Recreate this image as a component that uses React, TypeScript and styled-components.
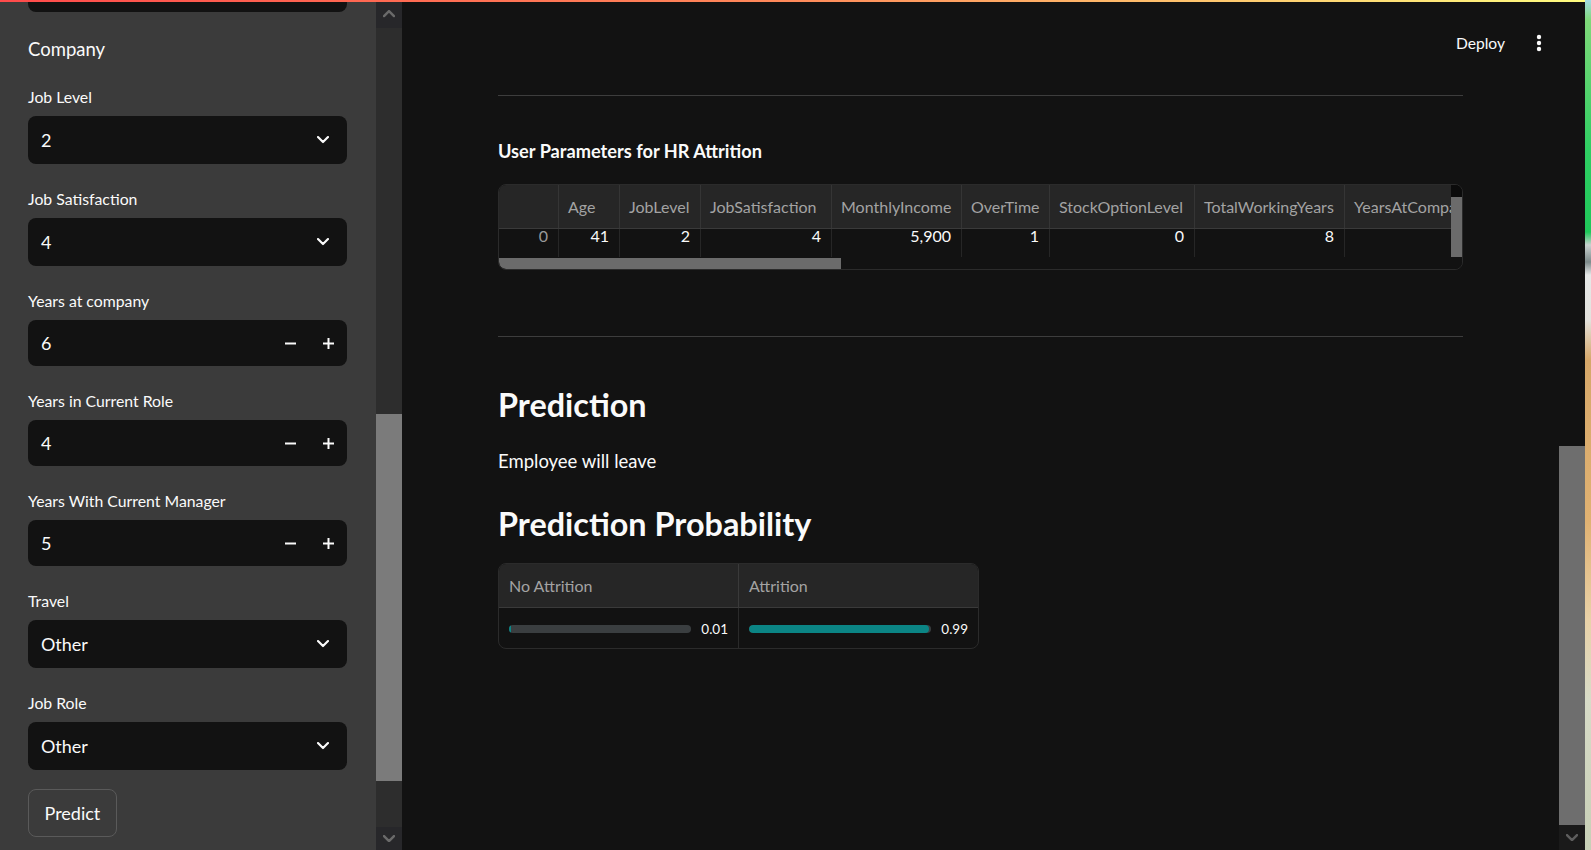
import React from 'react';
import styled, { createGlobalStyle } from 'styled-components';

const GlobalStyle = createGlobalStyle`
  html, body {
    margin: 0;
    padding: 0;
    background: #121212;
    overflow: hidden;
  }
  body {
    font-family: Lato, "Liberation Sans", sans-serif;
    color: #fafafa;
  }
  * {
    box-sizing: border-box;
  }
`;

const Window = styled.div`
  position: relative;
  display: flex;
  width: 1591px;
  height: 850px;
  overflow: hidden;
`;

const Decoration = styled.div`
  position: absolute;
  top: 0;
  left: 0;
  width: 1585px;
  height: 2px;
  background: linear-gradient(90deg, #ff4b4b 0%, #ff8a5a 50%, #fffd80 100%);
  z-index: 5;
`;

/* ---------- sidebar ---------- */

const Sidebar = styled.aside`
  width: 376px;
  height: 850px;
  flex-shrink: 0;
  background: #3b3b3b;
  overflow: hidden;
`;

const SidebarInner = styled.div`
  display: flex;
  flex-direction: column;
  gap: 24px;
  margin-top: -36px;
  padding: 0 29px 0 28px;
`;

const SectionTitle = styled.div`
  font-size: 18.5px;
  line-height: 26px;
  color: #fafafa;
`;

const Field = styled.div`
  display: flex;
  flex-direction: column;
`;

const Label = styled.label`
  font-size: 15.8px;
  line-height: 22px;
  margin-bottom: 8px;
  color: #fafafa;
`;

const InputBox = styled.div<{ $h: number }>`
  height: ${(p) => p.$h}px;
  background: #121212;
  border-radius: 8px;
  display: flex;
  align-items: center;
  padding-left: 13px;
  font-size: 18px;
  color: #fafafa;
`;

const BoxValue = styled.span`
  flex: 1;
`;

const ChevronWrap = styled.span`
  width: 50px;
  display: flex;
  justify-content: center;
  padding-left: 2px;
`;

const StepButton = styled.span`
  width: 38px;
  height: 100%;
  display: flex;
  align-items: center;
  justify-content: center;
`;

const PredictButton = styled.button`
  align-self: flex-start;
  margin-top: -5px;
  height: 48px;
  padding: 0 15.5px;
  background: #3b3b3b;
  border: 1px solid #5a5a5a;
  border-radius: 8px;
  color: #fafafa;
  font-family: inherit;
  font-size: 18px;
`;

/* ---------- scrollbars ---------- */

const ScrollTrack = styled.div<{ $bg: string }>`
  width: 26px;
  height: 850px;
  flex-shrink: 0;
  display: flex;
  flex-direction: column;
  background: ${(p) => p.$bg};
`;

const ScrollButton = styled.div<{ $bg: string; $h: number }>`
  height: ${(p) => p.$h}px;
  background: ${(p) => p.$bg};
  display: flex;
  align-items: center;
  justify-content: center;
`;

const ScrollThumb = styled.div<{ $top: number; $h: number; $color: string }>`
  margin-top: ${(p) => p.$top}px;
  height: ${(p) => p.$h}px;
  background: ${(p) => p.$color};
`;

const Spacer = styled.div`
  flex: 1;
`;

/* ---------- main ---------- */

const Main = styled.main`
  flex: 1;
  min-width: 0;
  height: 850px;
  display: flex;
  flex-direction: column;
  background: #121212;
  overflow: hidden;
`;

const TopBar = styled.header`
  height: 86px;
  flex-shrink: 0;
  display: flex;
  align-items: center;
  justify-content: flex-end;
  padding-right: 4px;
`;

const DeployButton = styled.span`
  font-size: 15.6px;
  color: #fafafa;
`;

const KebabButton = styled.span`
  width: 32px;
  height: 32px;
  margin-left: 18px;
  display: flex;
  align-items: center;
  justify-content: center;
`;

const Content = styled.div`
  padding: 0 96px;
  display: flex;
  flex-direction: column;
`;

const Divider = styled.hr<{ $mt: number }>`
  margin: ${(p) => p.$mt}px 0 0 0;
  border: none;
  height: 1px;
  background: #3d3d3d;
`;

const BoldTitle = styled.div`
  margin-top: 43px;
  font-size: 18.2px;
  line-height: 24px;
  font-weight: 700;
  color: #fafafa;
`;

const SubHeader = styled.h3<{ $mt: number }>`
  margin: ${(p) => p.$mt}px 0 0 0;
  font-size: 32.4px;
  line-height: 40px;
  font-weight: 700;
  color: #fafafa;
`;

const Paragraph = styled.p`
  margin: 23px 0 0 0;
  font-size: 18.5px;
  line-height: 26px;
  color: #fafafa;
`;

/* ---------- dataframe ---------- */

const Frame = styled.div<{ $mt: number; $w?: number }>`
  margin-top: ${(p) => p.$mt}px;
  width: ${(p) => (p.$w ? `${p.$w}px` : 'auto')};
  height: 86px;
  border: 1px solid #2b2b2b;
  border-radius: 8px;
  overflow: hidden;
  display: flex;
`;

const GridArea = styled.div`
  flex: 1;
  min-width: 0;
  display: flex;
  flex-direction: column;
  overflow: hidden;
`;

const HeaderRow = styled.div`
  height: 44px;
  flex-shrink: 0;
  display: flex;
  background: #262626;
  border-bottom: 1px solid #3a3a3a;
`;

const BodyRow = styled.div<{ $h: number }>`
  height: ${(p) => p.$h}px;
  flex-shrink: 0;
  display: flex;
`;

const HeadCell = styled.div<{ $w: number }>`
  width: ${(p) => p.$w}px;
  flex-shrink: 0;
  display: flex;
  align-items: center;
  padding-left: 9px;
  border-right: 1px solid #353535;
  font-size: 16px;
  color: #a3a3a3;
  white-space: nowrap;
  overflow: hidden;
`;

const DataCell = styled.div<{ $w: number; $muted?: boolean }>`
  width: ${(p) => p.$w}px;
  flex-shrink: 0;
  padding: 0 10px 0 0;
  text-align: right;
  border-right: 1px solid #262626;
  font-size: 16px;
  line-height: 13px;
  color: ${(p) => (p.$muted ? '#9a9a9a' : '#fafafa')};
  white-space: nowrap;
`;

const HScroll = styled.div`
  height: 12px;
  flex-shrink: 0;
  display: flex;
  align-items: center;
`;

const HThumb = styled.div`
  width: 342px;
  height: 11px;
  background: #6b6b6b;
  border-bottom-left-radius: 7px;
`;

const VScroll = styled.div`
  width: 11px;
  flex-shrink: 0;
  display: flex;
  flex-direction: column;
  background: #121212;
`;

const VScrollTop = styled.div`
  height: 12px;
  background: #0b0b0b;
`;

const VThumb = styled.div`
  height: 60px;
  background: #6b6b6b;
`;

/* ---------- probability table ---------- */

const ProbHead = styled.div`
  flex: 1;
  display: flex;
  align-items: center;
  padding-left: 10px;
  font-size: 16px;
  color: #a3a3a3;
  & + & {
    border-left: 1px solid #3a3a3a;
  }
`;

const ProbCell = styled.div`
  flex: 1;
  display: flex;
  align-items: center;
  gap: 10px;
  padding: 0 10px;
  & + & {
    border-left: 1px solid #2a2a2a;
  }
`;

const Bar = styled.div`
  flex: 1;
  height: 8px;
  border-radius: 4px;
  background: #3a3e40;
  overflow: hidden;
`;

const BarFill = styled.div`
  height: 100%;
  border-radius: 4px;
  background: #0b8585;
`;

const BarValue = styled.span`
  font-size: 13.5px;
  color: #fafafa;
`;

const Desktop = styled.div`
  width: 6px;
  height: 850px;
  flex-shrink: 0;
  background: linear-gradient(
    180deg,
    #a3dbe6 0px,
    #7fd97a 20px,
    #2fcf63 150px,
    #1fc85a 232px,
    #c9d2d0 245px,
    #7d8b8b 262px,
    #e6e9e8 275px,
    #e3e2dd 320px,
    #d6a86a 360px,
    #e0b272 520px,
    #e9d2a8 620px,
    #d8dcc8 700px,
    #c7cfb6 850px
  );
`;

/* ---------- icons ---------- */

const ChevronDown = ({ color = '#fafafa', size = 12, w = 2.2 }: { color?: string; size?: number; w?: number }) => (
  <svg width={size} height={size * 0.6} viewBox="0 0 12 7" fill="none">
    <path d="M1 1l5 5 5-5" stroke={color} strokeWidth={w} strokeLinecap="round" strokeLinejoin="round" />
  </svg>
);

const ChevronUp = ({ color, size = 12 }: { color: string; size?: number }) => (
  <svg width={size} height={size * 0.6} viewBox="0 0 12 7" fill="none">
    <path d="M1 6l5-5 5 5" stroke={color} strokeWidth={2.4} strokeLinecap="round" strokeLinejoin="round" />
  </svg>
);

const MinusIcon = () => (
  <svg width="11" height="11" viewBox="0 0 11 11">
    <rect x="0" y="4.5" width="11" height="2" fill="#fafafa" />
  </svg>
);

const PlusIcon = () => (
  <svg width="11" height="11" viewBox="0 0 11 11">
    <rect x="0" y="4.5" width="11" height="2" fill="#fafafa" />
    <rect x="4.5" y="0" width="2" height="11" fill="#fafafa" />
  </svg>
);

const KebabIcon = () => (
  <svg width="6" height="18" viewBox="0 0 6 18">
    <circle cx="3" cy="3" r="2.2" fill="#fafafa" />
    <circle cx="3" cy="9" r="2.2" fill="#fafafa" />
    <circle cx="3" cy="15" r="2.2" fill="#fafafa" />
  </svg>
);

/* ---------- parts ---------- */

const SelectBox = ({ value }: { value: string }) => (
  <InputBox $h={48}>
    <BoxValue>{value}</BoxValue>
    <ChevronWrap>
      <ChevronDown />
    </ChevronWrap>
  </InputBox>
);

const NumberBox = ({ value }: { value: string }) => (
  <InputBox $h={46}>
    <BoxValue>{value}</BoxValue>
    <StepButton>
      <MinusIcon />
    </StepButton>
    <StepButton>
      <PlusIcon />
    </StepButton>
  </InputBox>
);

// the last column is cut by the grid's own scrollbar, as in the app
const columns = [
  { name: '', width: 60, value: '0', muted: true },
  { name: 'Age', width: 61, value: '41' },
  { name: 'JobLevel', width: 81, value: '2' },
  { name: 'JobSatisfaction', width: 131, value: '4' },
  { name: 'MonthlyIncome', width: 130, value: '5,900' },
  { name: 'OverTime', width: 88, value: '1' },
  { name: 'StockOptionLevel', width: 145, value: '0' },
  { name: 'TotalWorkingYears', width: 150, value: '8' },
  { name: 'YearsAtCompany', width: 160, value: '' },
];

const probabilities = [
  { label: 'No Attrition', value: 0.01 },
  { label: 'Attrition', value: 0.99 },
];

export default function App() {
  return (
    <>
      <GlobalStyle />
      <Window>
        <Decoration />

        <Sidebar>
          <SidebarInner>
            <SelectBox value="" />
            <SectionTitle>Company</SectionTitle>
            <Field>
              <Label>Job Level</Label>
              <SelectBox value="2" />
            </Field>
            <Field>
              <Label>Job Satisfaction</Label>
              <SelectBox value="4" />
            </Field>
            <Field>
              <Label>Years at company</Label>
              <NumberBox value="6" />
            </Field>
            <Field>
              <Label>Years in Current Role</Label>
              <NumberBox value="4" />
            </Field>
            <Field>
              <Label>Years With Current Manager</Label>
              <NumberBox value="5" />
            </Field>
            <Field>
              <Label>Travel</Label>
              <SelectBox value="Other" />
            </Field>
            <Field>
              <Label>Job Role</Label>
              <SelectBox value="Other" />
            </Field>
            <PredictButton>Predict</PredictButton>
          </SidebarInner>
        </Sidebar>

        <ScrollTrack $bg="#2d2d2d">
          <ScrollButton $bg="#27272a" $h={28}>
            <ChevronUp color="#6a6a6a" />
          </ScrollButton>
          <ScrollThumb $top={386} $h={367} $color="#7b7b7b" />
          <Spacer />
          <ScrollButton $bg="#27272a" $h={23}>
            <ChevronDown color="#6a6a6a" w={2.4} />
          </ScrollButton>
        </ScrollTrack>

        <Main>
          <TopBar>
            <DeployButton>Deploy</DeployButton>
            <KebabButton>
              <KebabIcon />
            </KebabButton>
          </TopBar>

          <Content>
            <Divider $mt={9} />
            <BoldTitle>User Parameters for HR Attrition</BoldTitle>

            <Frame $mt={21}>
              <GridArea>
                <HeaderRow>
                  {columns.map((c) => (
                    <HeadCell key={c.name || 'index'} $w={c.width}>
                      {c.name}
                    </HeadCell>
                  ))}
                </HeaderRow>
                <BodyRow $h={28}>
                  {columns.map((c) => (
                    <DataCell key={c.name || 'index'} $w={c.width} $muted={c.muted}>
                      {c.value}
                    </DataCell>
                  ))}
                </BodyRow>
                <HScroll>
                  <HThumb />
                </HScroll>
              </GridArea>
              <VScroll>
                <VScrollTop />
                <VThumb />
              </VScroll>
            </Frame>

            <Divider $mt={66} />
            <SubHeader $mt={48}>Prediction</SubHeader>
            <Paragraph>Employee will leave</Paragraph>
            <SubHeader $mt={30}>Prediction Probability</SubHeader>

            <Frame $mt={19} $w={481}>
              <GridArea>
                <HeaderRow>
                  {probabilities.map((p) => (
                    <ProbHead key={p.label}>{p.label}</ProbHead>
                  ))}
                </HeaderRow>
                <BodyRow $h={41}>
                  {probabilities.map((p) => (
                    <ProbCell key={p.label}>
                      <Bar>
                        <BarFill style={{ width: `${p.value * 100}%` }} />
                      </Bar>
                      <BarValue>{p.value.toFixed(2)}</BarValue>
                    </ProbCell>
                  ))}
                </BodyRow>
              </GridArea>
            </Frame>
          </Content>
        </Main>

        <ScrollTrack $bg="#121212">
          <ScrollThumb $top={446} $h={379} $color="#6e6e6e" />
          <Spacer />
          <ScrollButton $bg="#1a1a1a" $h={25}>
            <ChevronDown color="#5e5e5e" w={2.4} />
          </ScrollButton>
        </ScrollTrack>

        <Desktop />
      </Window>
    </>
  );
}
